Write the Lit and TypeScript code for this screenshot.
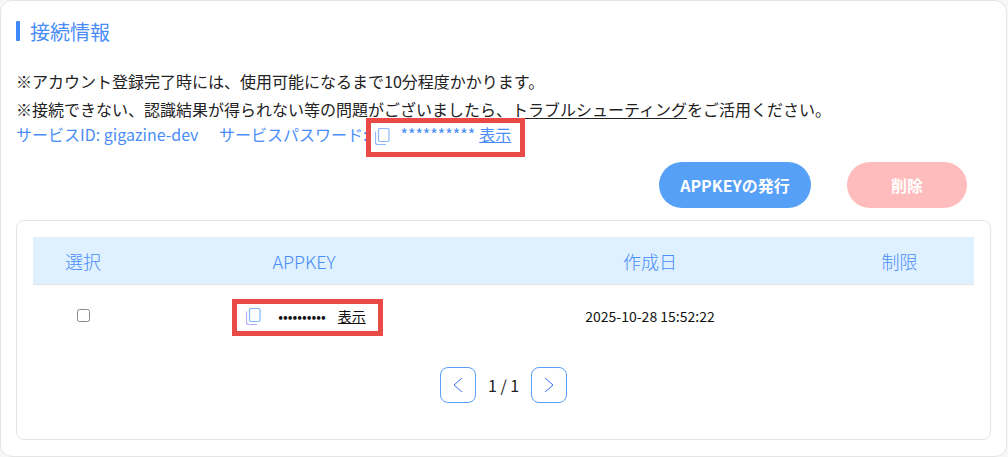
import { LitElement, html, css, svg } from 'lit';
import { customElement, property } from 'lit/decorators.js';

const copyIcon = svg`<path class="front" d="M5 .5h7.5a1.5 1.5 0 0 1 1.5 1.5v10a1.5 1.5 0 0 1-1.5 1.5h-7.5a1.5 1.5 0 0 1-1.5-1.5V2a1.5 1.5 0 0 1 1.5-1.5z" /><path class="back" d="M.5 3.5v11a2 2 0 0 0 2 2h8.5" />`;

@customElement('copy-secret')
class CopySecret extends LitElement {
  @property({ type: String }) mask = '';

  static styles = css`
    :host {
      display: inline-flex;
      align-items: center;
      position: relative;
      color: inherit;
    }

    svg {
      width: 15px;
      height: 17px;
      margin-top: var(--icon-drop, 0);
      fill: none;
      stroke-width: 1.2;
      flex: none;
    }

    .front {
      stroke: var(--icon-color, currentColor);
    }

    .back {
      stroke: var(--icon-back, var(--icon-color, currentColor));
    }

    .mask {
      margin-left: var(--mask-gap, 10px);
    }

    a {
      margin-left: var(--link-gap, 4px);
      color: inherit;
      text-decoration: underline;
    }
  `;

  render() {
    return html`<svg viewBox="0 0 15 17">${copyIcon}</svg>
      <span class="mask">${this.mask}</span>
      <a>表示</a>`;
  }
}

@customElement('app-root')
class AppRoot extends LitElement {
  static styles = css`
    :host {
      display: block;
      width: 1008px;
      height: 457px;
      overflow: hidden;
      background: #f7f7f7;
      font-family: 'Noto Sans CJK JP', 'Noto Sans', sans-serif;
      color: #222;
    }

    .card {
      box-sizing: border-box;
      width: 1007px;
      height: 457px;
      padding: 20px 15px 0;
      background: #fff;
      border: 1px solid #e5e5e5;
      border-radius: 12px;
    }

    h2 {
      display: flex;
      align-items: center;
      gap: 10px;
      height: 20px;
      margin: 0;
      font-size: 20px;
      font-weight: 400;
      color: #4a8df8;
    }

    h2::before {
      content: '';
      width: 4px;
      height: 20px;
      border-radius: 1px;
      background: #3f86f8;
    }

    .notes {
      margin: 26px 0 0;
      font-size: 16px;
      line-height: 28px;
      color: #222;
    }

    .notes p {
      margin: 0;
    }

    .notes u {
      text-underline-offset: 2px;
    }

    .service {
      display: flex;
      align-items: center;
      height: 24px;
      margin-top: -1px;
      font-size: 16px;
      color: #4a8df8;
    }

    .service .id {
      width: 203px;
    }

    .service copy-secret {
      margin-left: 8px;
      --icon-color: #8db6fb;
      --icon-drop: 4px;
    }

    .actions {
      display: flex;
      justify-content: flex-end;
      gap: 36px;
      margin: 16px 24px 0 0;
    }

    button {
      height: 46px;
      border: 0;
      border-radius: 23px;
      color: #fff;
      font: 700 16px 'Noto Sans CJK JP', sans-serif;
      padding: 0;
    }

    .issue {
      width: 152px;
      background: #57a0f7;
    }

    .delete {
      width: 120px;
      background: #ffbcbc;
    }

    .panel {
      box-sizing: border-box;
      width: 975px;
      height: 220px;
      margin-top: 12px;
      padding: 16px 16px 0;
      border: 1px solid #e5e5e5;
      border-radius: 8px;
    }

    .row {
      display: grid;
      grid-template-columns: 100px 342px 350px 149px;
      align-items: center;
      justify-items: center;
    }

    .head {
      height: 47px;
      background: #dff0fe;
      border-bottom: 1px solid #e3e6e8;
      font-size: 18px;
      font-weight: 300;
      color: #4a8df8;
    }

    .body {
      height: 62px;
      font-size: 14px;
      color: #111;
    }

    .body input {
      width: 13px;
      height: 13px;
      margin: -2px 0 0;
      opacity: 0.85;
    }

    .body copy-secret {
      margin-left: 4px;
      --mask-gap: 17px;
      --link-gap: 12px;
      --icon-color: #7fb6fc;
      --icon-back: #b4aefc;
      color: #111;
    }

    .pager {
      display: flex;
      justify-content: center;
      align-items: center;
      gap: 12px;
      margin-top: 20px;
      font-size: 16px;
      color: #222;
    }

    .pager span {
      width: 31px;
      text-align: center;
      white-space: nowrap;
    }

    .page {
      box-sizing: border-box;
      display: flex;
      align-items: center;
      justify-content: center;
      width: 36px;
      height: 36px;
      border: 1px solid #5aa0f8;
      border-radius: 8px;
      background: #fff;
    }

    .page svg {
      width: 12px;
      height: 16px;
      fill: none;
      stroke: #3b6ff0;
      stroke-width: 1;
    }

    .mark {
      position: absolute;
      box-sizing: border-box;
      border: 5px solid #ea4a45;
    }

    .wrap {
      position: relative;
    }
  `;

  render() {
    return html`<div class="wrap">
      <section class="card">
        <h2>接続情報</h2>
        <div class="notes">
          <p>※アカウント登録完了時には、使用可能になるまで10分程度かかります。</p>
          <p>※接続できない、認識結果が得られない等の問題がございましたら、<u>トラブルシューティング</u>をご活用ください。</p>
        </div>
        <div class="service">
          <span class="id">サービスID: gigazine-dev</span>
          <span>サービスパスワード:</span>
          <copy-secret mask="**********"></copy-secret>
        </div>
        <div class="actions">
          <button class="issue">APPKEYの発行</button>
          <button class="delete">削除</button>
        </div>
        <div class="panel">
          <div class="row head">
            <span>選択</span><span>APPKEY</span><span>作成日</span><span>制限</span>
          </div>
          <div class="row body">
            <input type="checkbox" />
            <copy-secret mask="••••••••••"></copy-secret>
            <span>2025-10-28 15:52:22</span>
            <span></span>
          </div>
          <div class="pager">
            <div class="page">
              <svg viewBox="0 0 12 16"><path d="M10 1L2 8l8 7" /></svg>
            </div>
            <span>1 / 1</span>
            <div class="page">
              <svg viewBox="0 0 12 16"><path d="M2 1l8 7-8 7" /></svg>
            </div>
          </div>
        </div>
      </section>
      <div class="mark" style="left:366px;top:118px;width:159px;height:39px"></div>
      <div class="mark" style="left:232px;top:299px;width:151px;height:37px"></div>
    </div>`;
  }
}
